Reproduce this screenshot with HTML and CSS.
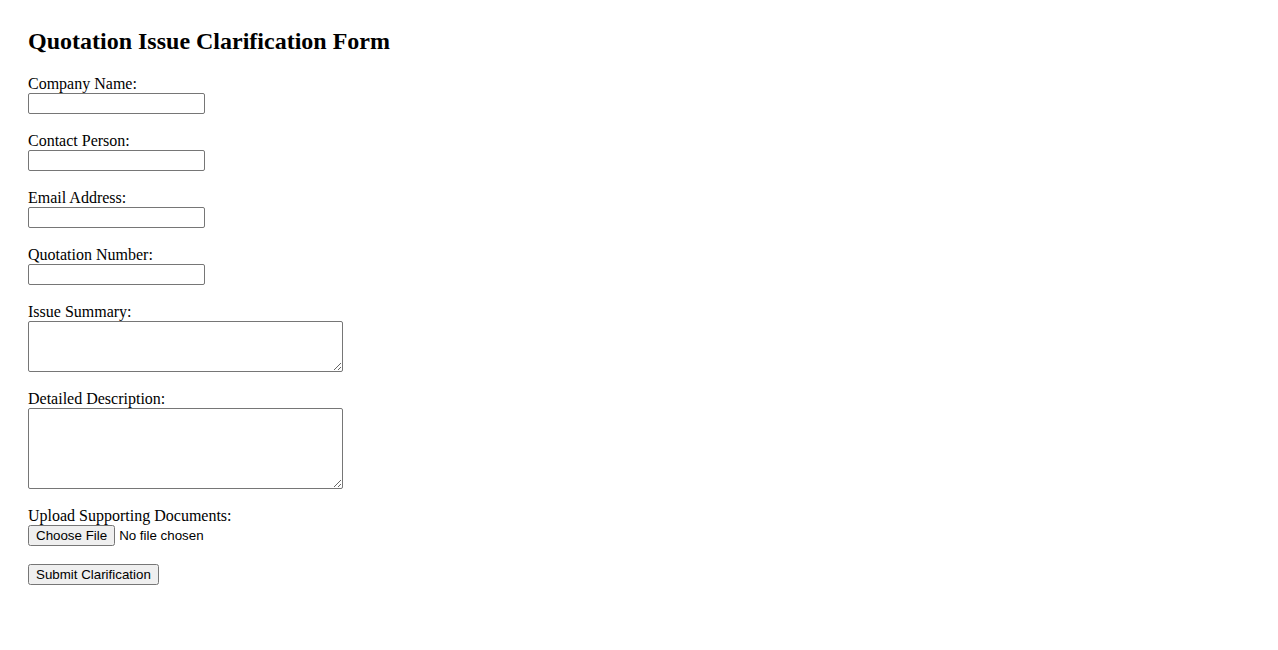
FILE: index.html
```html
<!DOCTYPE html>
<html lang="en">
<head>
<meta charset="utf-8">
<title>Quotation Issue Clarification Form</title>
<link rel="stylesheet" href="styles.css">
</head>
<body>
<div class="page">
  <h2 class="title">Quotation Issue Clarification Form</h2>
  <form class="form">
    <label for="company">Company Name:</label><br>
    <input class="text-input" type="text" id="company"><br><br>
    <label for="contact">Contact Person:</label><br>
    <input class="text-input" type="text" id="contact"><br><br>
    <label for="email">Email Address:</label><br>
    <input class="text-input" type="email" id="email"><br><br>
    <label for="quote">Quotation Number:</label><br>
    <input class="text-input" type="text" id="quote"><br><br>
    <label for="summary">Issue Summary:</label><br>
    <textarea class="area area-short" id="summary"></textarea><br><br>
    <label for="details">Detailed Description:</label><br>
    <textarea class="area area-tall" id="details"></textarea><br><br>
    <label for="docs">Upload Supporting Documents:</label><br>
    <input class="file-input" type="file" id="docs"><br><br>
    <button class="submit" type="button">Submit Clarification</button>
  </form>
</div>
</body>
</html>
```
FILE: styles.css
```css
html, body {
  background: #ffffff;
}
body {
  margin: 8px;
  font-family: "Liberation Serif", "Times New Roman", serif;
  font-size: 16px;
  color: #000;
}
.page {
  padding: 20px;
}
.title {
  margin: 0 0 19.92px 0;
  font-size: 24px;
  font-weight: bold;
}
.form {
  margin: 0;
}
.text-input {
  box-sizing: border-box;
  width: 177px;
  height: 21px;
  border: 1px solid #767676;
  border-radius: 2px;
  padding: 1px 2px;
  font-family: "Liberation Sans", Arial, sans-serif;
  font-size: 13.33px;
}
.area {
  box-sizing: border-box;
  width: 315px;
  border: 1px solid #767676;
  border-radius: 2px;
  padding: 2px;
  font-family: "Liberation Mono", monospace;
  font-size: 13.33px;
  vertical-align: bottom;
}
.area-short {
  height: 51px;
}
.area-tall {
  height: 81px;
}
.file-input {
  font-family: "Liberation Sans", Arial, sans-serif;
  font-size: 13.33px;
}
.submit {
  font-family: "Liberation Sans", Arial, sans-serif;
  font-size: 13.33px;
}
```
